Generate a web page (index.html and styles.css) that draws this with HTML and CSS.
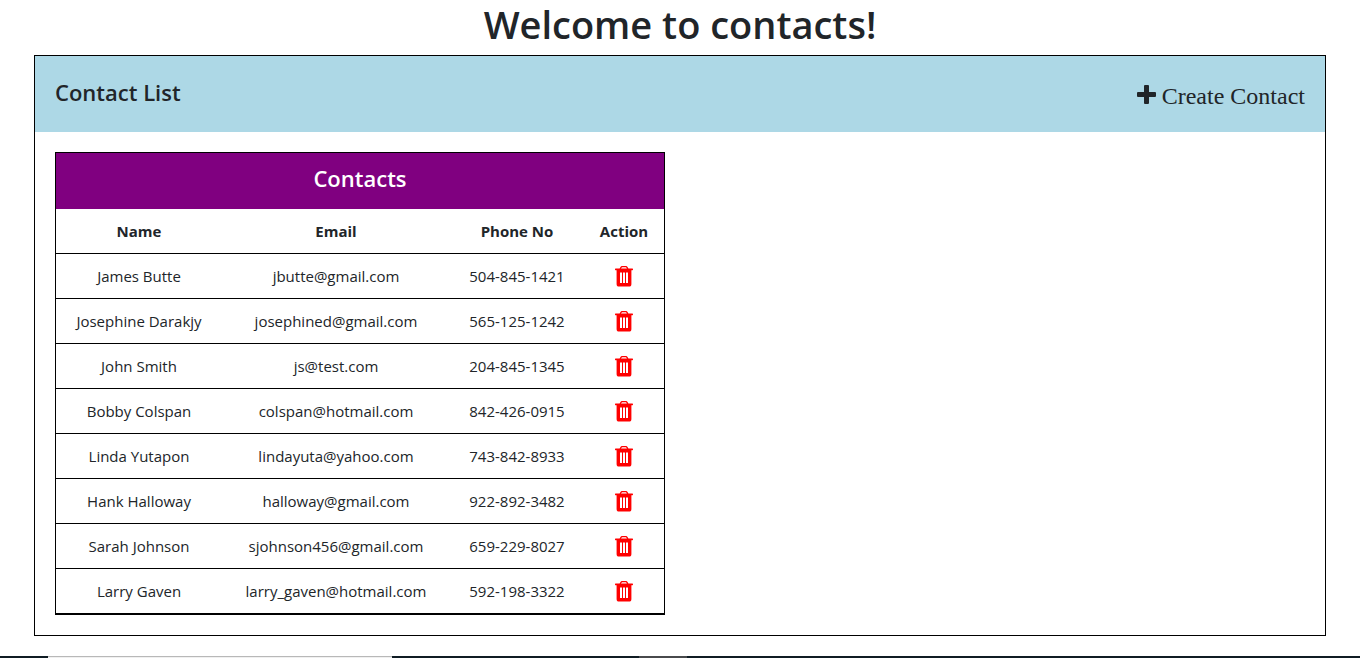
FILE: index.html
```html
<!DOCTYPE html>
<html lang="en">
<head>
<meta charset="utf-8">
<title>Contacts</title>
<link rel="stylesheet" href="styles.css">
</head>
<body>
<svg class="sprite" aria-hidden="true">
  <symbol id="trash" viewBox="0 0 18 22">
    <path fill="none" stroke="currentColor" stroke-width="1.3" d="M5 4.5L6 2.4Q6.3 1.7 7 1.7H11Q11.7 1.7 12 2.4L13 4.5"/>
    <path fill="currentColor" d="M0.6 3.4H17.4Q18 3.4 18 4V4.6Q18 5.2 17.4 5.2H0.6Q0 5.2 0 4.6V4Q0 3.4 0.6 3.4Z"/>
    <path fill="currentColor" fill-rule="evenodd" d="M1.6 5H16.4V19Q16.4 21.6 14 21.6H4Q1.6 21.6 1.6 19ZM5 7.5V18H7V7.5ZM8 7.5V18H10V7.5ZM11 7.5V18H13V7.5Z"/>
  </symbol>
</svg>
<h1 class="page-title">Welcome to contacts!</h1>
<main class="panel">
  <header class="panel-header">
    <h2 class="panel-title">Contact List</h2>
    <button class="create" type="button">
      <svg class="plus" viewBox="0 0 19 19" aria-hidden="true"><path fill="currentColor" d="M8 0H11Q12 0 12 1V7H18Q19 7 19 8V11Q19 12 18 12H12V18Q12 19 11 19H8Q7 19 7 18V12H1Q0 12 0 11V8Q0 7 1 7H7V1Q7 0 8 0Z"/></svg>
      <span>Create Contact</span>
    </button>
  </header>
  <div class="panel-body">
    <section class="card">
      <h2 class="card-title">Contacts</h2>
      <table class="contacts">
        <colgroup><col class="col-name"><col class="col-email"><col class="col-phone"><col class="col-action"></colgroup>
        <thead><tr><th scope="col">Name</th><th scope="col">Email</th><th scope="col">Phone No</th><th scope="col">Action</th></tr></thead>
        <tbody>
          <tr><td>James Butte</td><td>jbutte@gmail.com</td><td>504-845-1421</td><td><button class="delete" type="button" aria-label="Delete James Butte"><svg><use href="#trash"/></svg></button></td></tr>
          <tr><td>Josephine Darakjy</td><td>josephined@gmail.com</td><td>565-125-1242</td><td><button class="delete" type="button" aria-label="Delete Josephine Darakjy"><svg><use href="#trash"/></svg></button></td></tr>
          <tr><td>John Smith</td><td>js@test.com</td><td>204-845-1345</td><td><button class="delete" type="button" aria-label="Delete John Smith"><svg><use href="#trash"/></svg></button></td></tr>
          <tr><td>Bobby Colspan</td><td>colspan@hotmail.com</td><td>842-426-0915</td><td><button class="delete" type="button" aria-label="Delete Bobby Colspan"><svg><use href="#trash"/></svg></button></td></tr>
          <tr><td>Linda Yutapon</td><td>lindayuta@yahoo.com</td><td>743-842-8933</td><td><button class="delete" type="button" aria-label="Delete Linda Yutapon"><svg><use href="#trash"/></svg></button></td></tr>
          <tr><td>Hank Halloway</td><td>halloway@gmail.com</td><td>922-892-3482</td><td><button class="delete" type="button" aria-label="Delete Hank Halloway"><svg><use href="#trash"/></svg></button></td></tr>
          <tr><td>Sarah Johnson</td><td>sjohnson456@gmail.com</td><td>659-229-8027</td><td><button class="delete" type="button" aria-label="Delete Sarah Johnson"><svg><use href="#trash"/></svg></button></td></tr>
          <tr><td>Larry Gaven</td><td>larry_gaven@hotmail.com</td><td>592-198-3322</td><td><button class="delete" type="button" aria-label="Delete Larry Gaven"><svg><use href="#trash"/></svg></button></td></tr>
        </tbody>
      </table>
    </section>
  </div>
</main>
<div class="bottom-strip"><span class="strip-light"></span><span class="strip-gray"></span></div>
</body>
</html>
```
FILE: styles.css
```css
* { box-sizing: border-box; }
body {
  margin: 0;
  background: #fff;
  color: #212529;
  font: 15px/24px "Open Sans", "Noto Sans", sans-serif;
}
.sprite { display: none; }
.page-title {
  margin: 0;
  padding-bottom: 7px;
  font-size: 38px;
  font-weight: 600;
  line-height: 48px;
  text-align: center;
}
.panel { margin: 0 34px; border: 1px solid #000; }
.panel-header {
  display: flex;
  justify-content: space-between;
  align-items: flex-start;
  padding: 20px;
  background: #add8e6;
}
.panel-title { margin: 0; font-size: 22px; font-weight: 600; line-height: 32px; }
.create {
  display: flex;
  align-items: center;
  gap: 6px;
  padding: 4px 0 0;
  border: 0;
  background: none;
  color: inherit;
  font: 24px/32px "Liberation Serif", serif;
  cursor: pointer;
}
.plus { width: 19px; height: 19px; margin-bottom: 3px; }
.panel-body { padding: 20px; }
.card { width: 50%; max-width: 610px; border: 1px solid #000; }
.card-title {
  margin: 0;
  padding: 9px 0 15px;
  background: purple;
  color: #fff;
  font-size: 22px;
  font-weight: 600;
  line-height: 32px;
  text-align: center;
}
.contacts { width: 100%; border-collapse: separate; border-spacing: 0; table-layout: fixed; }
.col-name { width: 166px; }
.col-phone { width: 134px; }
.col-action { width: 80px; }
.contacts th, .contacts td {
  height: 45px;
  padding: 0;
  border-bottom: 1px solid #000;
  text-align: center;
  vertical-align: middle;
}
.contacts th { font-weight: 700; }
.contacts td { font-weight: 400; }
.delete { display: block; margin: 0 auto; padding: 0; border: 0; background: none; color: red; cursor: pointer; }
.delete svg { display: block; width: 18px; height: 22px; }
.bottom-strip { display: flex; height: 2px; margin-top: 20px; background: #101c24; }
.strip-light { width: 344px; margin-left: 48px; border-top: 1px solid #b8b8b8; background: #f0f0f0; }
.strip-gray { width: 48px; margin-left: 247px; background: #484a4c; }
```
